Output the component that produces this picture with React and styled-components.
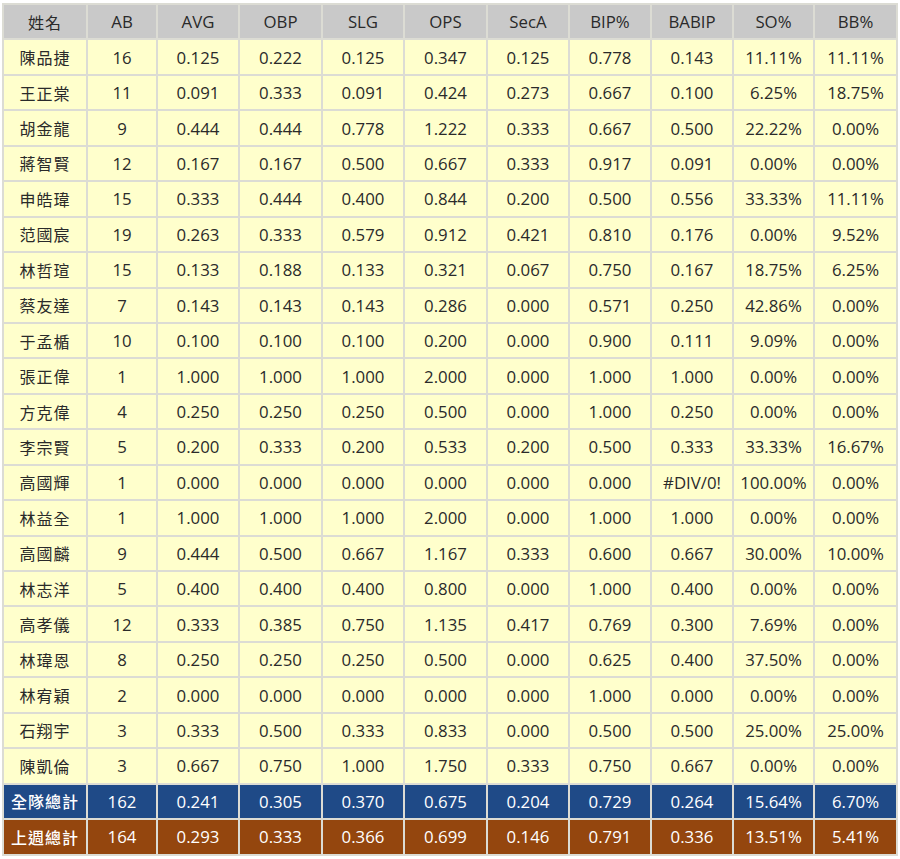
import React from "react";
import styled, { createGlobalStyle } from "styled-components";

const Global = createGlobalStyle`
  html, body { margin: 0; padding: 0; background: #ffffff; }
  body { font-family: "Open Sans", "Noto Sans CJK TC", sans-serif; }
`;

const Page = styled.div`
  padding: 3px 0 0 2px;
`;

const Grid = styled.div`
  display: inline-grid;
  grid-template-columns: 82px 68px 80px 81px 80px 81px 80px 80px 80px 79px 81px;
  grid-auto-rows: 33.45px;
  gap: 2px;
  padding: 2px;
  background: #dcdcd4;
`;

const bgMap = {
  head: "#c9c9c9",
  body: "#ffffcc",
  team: "#1f4a87",
  last: "#94460e",
};

const Cell = styled.div`
  display: flex;
  align-items: center;
  justify-content: center;
  background: ${(p) => bgMap[p.$kind]};
  color: ${(p) => (p.$kind === "team" || p.$kind === "last" ? "#ffffff" : "#2a2a2a")};
  font-size: ${(p) => (p.$cjk ? "16px" : "16.8px")};
  font-weight: ${(p) => (p.$bold ? 500 : 400)};
  letter-spacing: ${(p) => (p.$cjk ? "1px" : "0")};
  white-space: nowrap;
`;

const headers = ["姓名", "AB", "AVG", "OBP", "SLG", "OPS", "SecA", "BIP%", "BABIP", "SO%", "BB%"];

const rows = [
  ["陳品捷", "16", "0.125", "0.222", "0.125", "0.347", "0.125", "0.778", "0.143", "11.11%", "11.11%"],
  ["王正棠", "11", "0.091", "0.333", "0.091", "0.424", "0.273", "0.667", "0.100", "6.25%", "18.75%"],
  ["胡金龍", "9", "0.444", "0.444", "0.778", "1.222", "0.333", "0.667", "0.500", "22.22%", "0.00%"],
  ["蔣智賢", "12", "0.167", "0.167", "0.500", "0.667", "0.333", "0.917", "0.091", "0.00%", "0.00%"],
  ["申皓瑋", "15", "0.333", "0.444", "0.400", "0.844", "0.200", "0.500", "0.556", "33.33%", "11.11%"],
  ["范國宸", "19", "0.263", "0.333", "0.579", "0.912", "0.421", "0.810", "0.176", "0.00%", "9.52%"],
  ["林哲瑄", "15", "0.133", "0.188", "0.133", "0.321", "0.067", "0.750", "0.167", "18.75%", "6.25%"],
  ["蔡友達", "7", "0.143", "0.143", "0.143", "0.286", "0.000", "0.571", "0.250", "42.86%", "0.00%"],
  ["于孟楯", "10", "0.100", "0.100", "0.100", "0.200", "0.000", "0.900", "0.111", "9.09%", "0.00%"],
  ["張正偉", "1", "1.000", "1.000", "1.000", "2.000", "0.000", "1.000", "1.000", "0.00%", "0.00%"],
  ["方克偉", "4", "0.250", "0.250", "0.250", "0.500", "0.000", "1.000", "0.250", "0.00%", "0.00%"],
  ["李宗賢", "5", "0.200", "0.333", "0.200", "0.533", "0.200", "0.500", "0.333", "33.33%", "16.67%"],
  ["高國輝", "1", "0.000", "0.000", "0.000", "0.000", "0.000", "0.000", "#DIV/0!", "100.00%", "0.00%"],
  ["林益全", "1", "1.000", "1.000", "1.000", "2.000", "0.000", "1.000", "1.000", "0.00%", "0.00%"],
  ["高國麟", "9", "0.444", "0.500", "0.667", "1.167", "0.333", "0.600", "0.667", "30.00%", "10.00%"],
  ["林志洋", "5", "0.400", "0.400", "0.400", "0.800", "0.000", "1.000", "0.400", "0.00%", "0.00%"],
  ["高孝儀", "12", "0.333", "0.385", "0.750", "1.135", "0.417", "0.769", "0.300", "7.69%", "0.00%"],
  ["林瑋恩", "8", "0.250", "0.250", "0.250", "0.500", "0.000", "0.625", "0.400", "37.50%", "0.00%"],
  ["林宥穎", "2", "0.000", "0.000", "0.000", "0.000", "0.000", "1.000", "0.000", "0.00%", "0.00%"],
  ["石翔宇", "3", "0.333", "0.500", "0.333", "0.833", "0.000", "0.500", "0.500", "25.00%", "25.00%"],
  ["陳凱倫", "3", "0.667", "0.750", "1.000", "1.750", "0.333", "0.750", "0.667", "0.00%", "0.00%"],
];

const totals = [
  { kind: "team", cells: ["全隊總計", "162", "0.241", "0.305", "0.370", "0.675", "0.204", "0.729", "0.264", "15.64%", "6.70%"] },
  { kind: "last", cells: ["上週總計", "164", "0.293", "0.333", "0.366", "0.699", "0.146", "0.791", "0.336", "13.51%", "5.41%"] },
];

export default function App() {
  return (
    <Page>
      <Global />
      <Grid>
        {headers.map((h, i) => (
          <Cell key={"h" + i} $kind="head" $cjk={i === 0}>{h}</Cell>
        ))}
        {rows.map((r, ri) =>
          r.map((c, ci) => (
            <Cell key={ri + "-" + ci} $kind="body" $cjk={ci === 0}>{c}</Cell>
          ))
        )}
        {totals.map((t) =>
          t.cells.map((c, ci) => (
            <Cell key={t.kind + ci} $kind={t.kind} $cjk={ci === 0} $bold={ci === 0}>{c}</Cell>
          ))
        )}
      </Grid>
    </Page>
  );
}
